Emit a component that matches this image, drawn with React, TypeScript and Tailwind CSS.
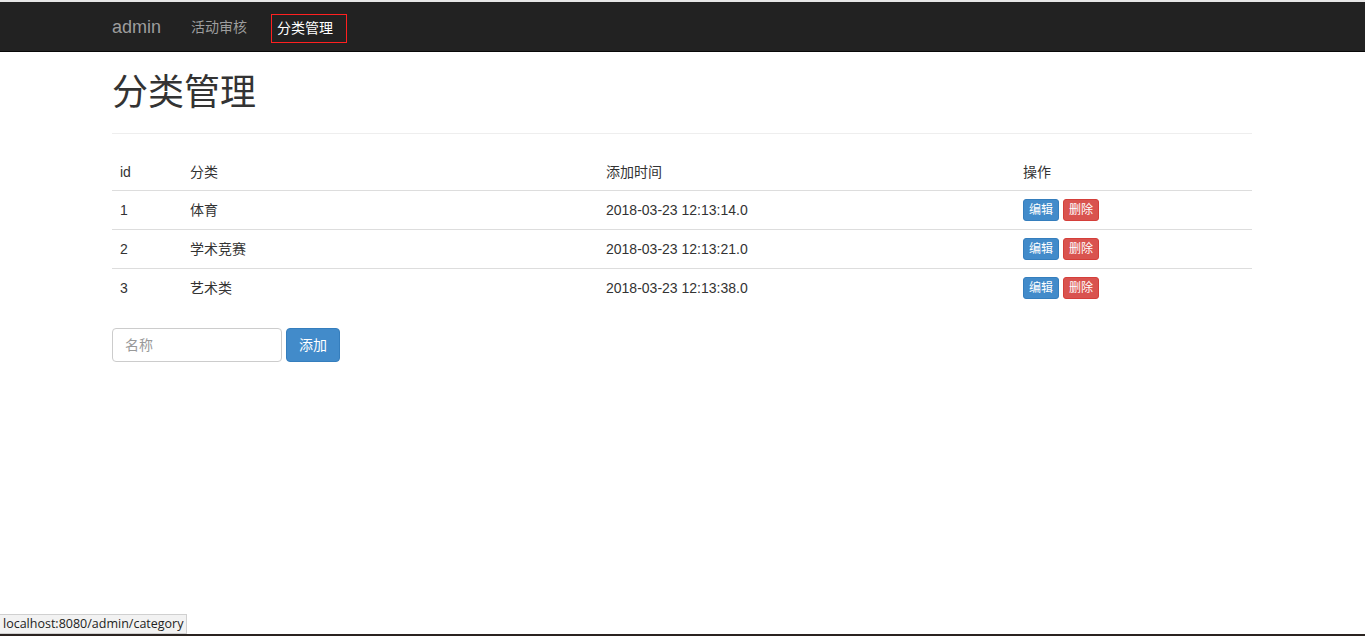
import React from "react";

const font = { fontFamily: '"Liberation Sans", "Noto Sans CJK SC", Arial, sans-serif' };

const rows = [
  { id: 1, name: "体育", time: "2018-03-23 12:13:14.0" },
  { id: 2, name: "学术竞赛", time: "2018-03-23 12:13:21.0" },
  { id: 3, name: "艺术类", time: "2018-03-23 12:13:38.0" },
];

export default function App() {
  return (
    <div className="relative h-[636px] w-full overflow-hidden bg-white text-[14px] text-[#333]" style={font}>
      <div className="h-[2px] bg-[#e6e6e6]" />
      <nav className="h-[50px] border-b border-[#080808] bg-[#222]">
        <div className="ml-[112px] flex h-[49px] w-[1140px] items-center pt-[2px]">
          <span className="pr-[15px] text-[18px] text-[#9d9d9d]">admin</span>
          <span className="px-[15px] text-[#9d9d9d]">活动审核</span>
          <div className="relative ml-[10px] mt-[1px] flex h-[27px] w-[74px] items-center outline outline-1 outline-[#ff2020]">
            <span className="pl-[5px] text-white">分类管理</span>
          </div>
        </div>
      </nav>
      <div className="ml-[112px] w-[1140px] pt-[21px]">
        <div className="border-b border-[#eee] pb-[20px]">
          <h1 className="h-[40px] text-[36px] leading-[40px] text-[#333]">分类管理</h1>
        </div>
        <table className="mt-[19px] w-full border-collapse text-left">
          <thead>
            <tr className="h-[37px] border-b border-[#ddd]">
              <th className="w-[70px] px-[8px] pt-[2px] font-normal">id</th>
              <th className="w-[416px] px-[8px] pt-[2px] font-normal">分类</th>
              <th className="w-[417px] px-[8px] pt-[2px] font-normal">添加时间</th>
              <th className="px-[8px] pt-[2px] font-normal">操作</th>
            </tr>
          </thead>
          <tbody>
            {rows.map((r, i) => (
              <tr key={r.id} className={i > 0 ? "h-[39px] border-t border-[#ddd]" : "h-[39px]"}>
                <td className="px-[8px] pt-[1px]">{r.id}</td>
                <td className="px-[8px] pt-[1px]">{r.name}</td>
                <td className="px-[8px] pt-[1px]">{r.time}</td>
                <td className="px-[8px]">
                  <div className="flex gap-[4px] pt-[1px]">
                    <button className="flex h-[22px] w-[36px] items-center justify-center rounded-[3px] border border-[#357ebd] bg-[#428bca] text-[12px] text-white">
                      编辑
                    </button>
                    <button className="flex h-[22px] w-[36px] items-center justify-center rounded-[3px] border border-[#d43f3a] bg-[#d9534f] text-[12px] text-white">
                      删除
                    </button>
                  </div>
                </td>
              </tr>
            ))}
          </tbody>
        </table>
        <div className="mt-[21px] flex gap-[4px]">
          <input
            placeholder="名称"
            className="h-[34px] w-[170px] rounded-[4px] border border-[#ccc] px-[12px] text-[14px] text-[#555] placeholder:text-[#999] outline-none"
          />
          <button className="h-[34px] w-[54px] rounded-[4px] border border-[#357ebd] bg-[#428bca] text-[14px] text-white">
            添加
          </button>
        </div>
      </div>
      <div className="absolute bottom-[2px] left-0 flex h-[20px] items-center border border-l-0 border-[#d0d0d0] bg-[#f2f2f2] px-[3px] text-[12.5px] text-[#222]" style={{ fontFamily: '"Open Sans", "Noto Sans", sans-serif' }}>
        localhost:8080/admin/category
      </div>
      <div className="absolute bottom-0 left-0 h-[2px] w-full bg-[#2a2320]" />
    </div>
  );
}
